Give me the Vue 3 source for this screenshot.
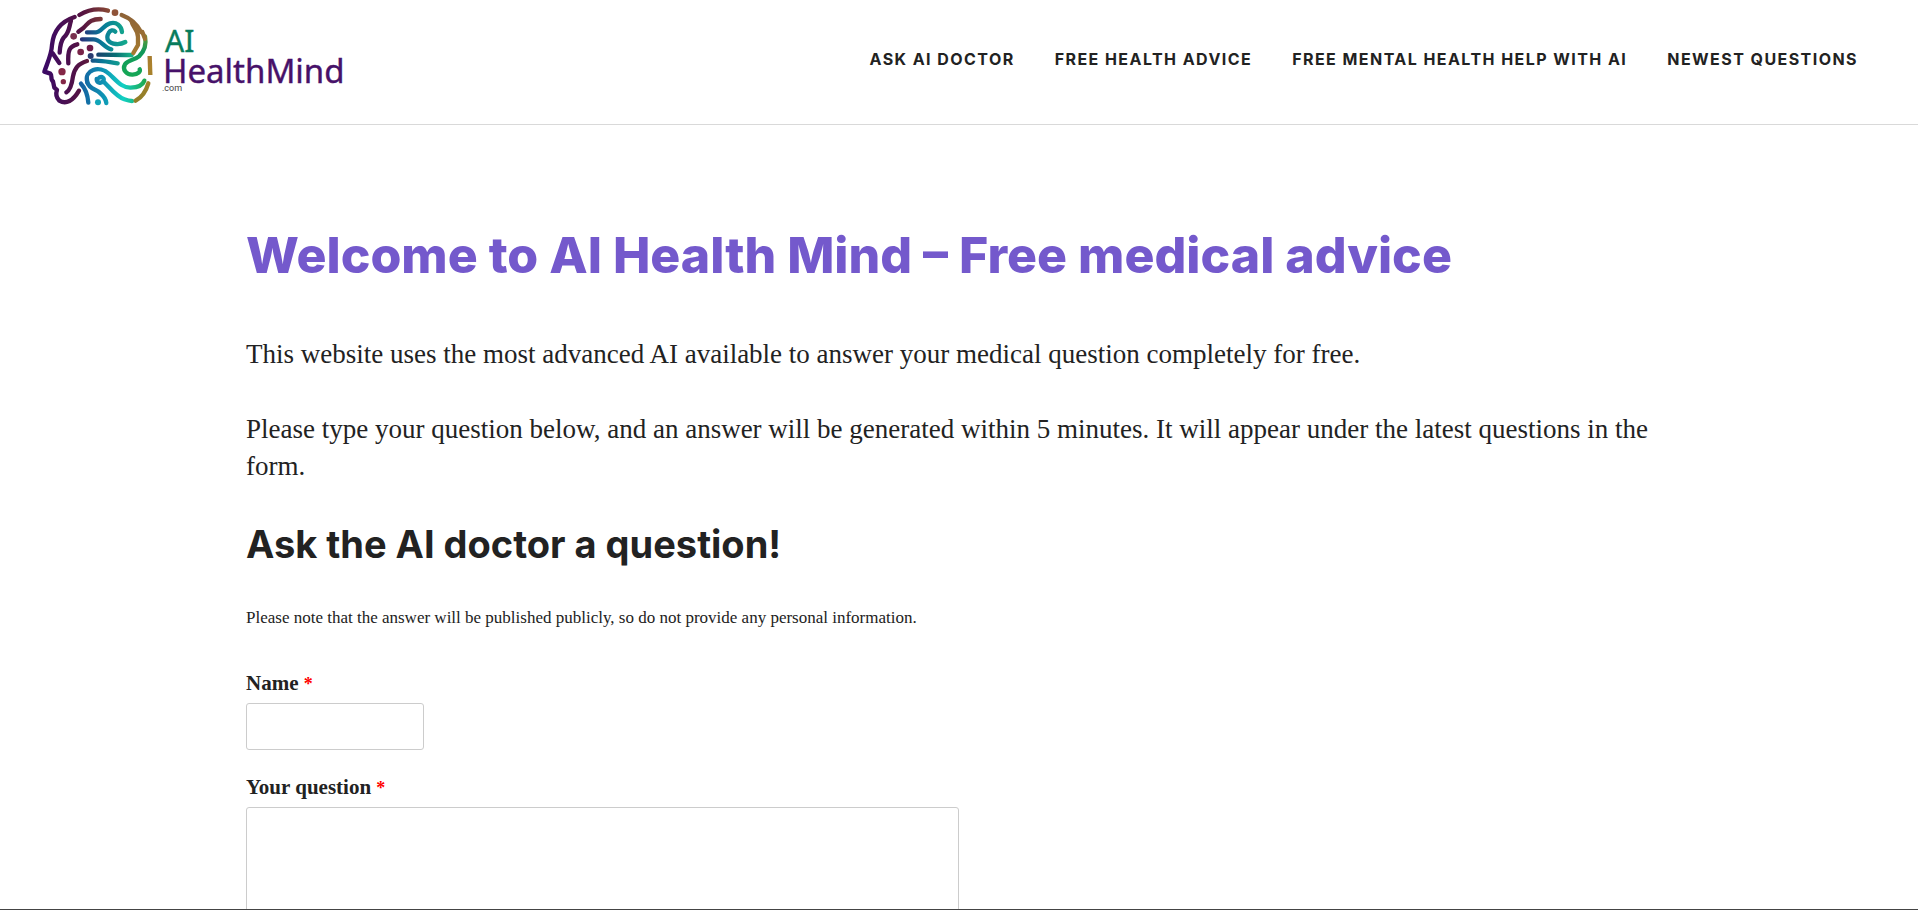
<script setup>
const links = ['Ask AI Doctor', 'Free Health Advice', 'Free Mental Health Help with AI', 'Newest Questions']
</script>

<template>
  <div class="page">
    <header class="header">
      <a class="brand" href="#" aria-label="AI HealthMind.com">
        <svg class="logo" viewBox="0 0 330 112" aria-hidden="true">
          <defs>
            <linearGradient id="outline" gradientUnits="userSpaceOnUse" x1="30" y1="0" x2="220" y2="0">
              <stop offset="0" stop-color="#3c0a64" /><stop offset=".6" stop-color="#571440" /><stop offset="1" stop-color="#8a4a34" />
            </linearGradient>
            <linearGradient id="teal" gradientUnits="userSpaceOnUse" x1="130" y1="0" x2="270" y2="0">
              <stop offset="0" stop-color="#2b2c78" /><stop offset=".5" stop-color="#087a98" /><stop offset="1" stop-color="#14a98c" />
            </linearGradient>
            <linearGradient id="bar" gradientUnits="userSpaceOnUse" x1="180" y1="0" x2="300" y2="0">
              <stop offset="0" stop-color="#1c3f6c" /><stop offset=".5" stop-color="#076f74" /><stop offset="1" stop-color="#1cc48c" />
            </linearGradient>
            <linearGradient id="spring" gradientUnits="userSpaceOnUse" x1="0" y1="105" x2="0" y2="230">
              <stop offset="0" stop-color="#6c9a30" /><stop offset=".4" stop-color="#10985a" /><stop offset="1" stop-color="#16a856" />
            </linearGradient>
            <linearGradient id="lower" gradientUnits="userSpaceOnUse" x1="135" y1="0" x2="330" y2="0">
              <stop offset="0" stop-color="#1560a0" /><stop offset=".35" stop-color="#0e94b4" /><stop offset=".65" stop-color="#12d0c4" /><stop offset="1" stop-color="#1fa84c" />
            </linearGradient>
            <linearGradient id="gold" gradientUnits="userSpaceOnUse" x1="0" y1="40" x2="0" y2="310">
              <stop offset="0" stop-color="#8d6238" /><stop offset=".6" stop-color="#ac822c" /><stop offset="1" stop-color="#8f7f28" />
            </linearGradient>
          </defs>
          <g class="strokes" transform="scale(.3333)">
            <g stroke="url(#outline)">
              <path d="M116 51C77 64 52 93 48 135C47 162 36 184 25 215L43 221C50 227 42 238 51 244L55 263L63 270C59 281 61 293 70 302C90 314 111 303 129 272" />
              <path d="M130 45C160 27 187 24 216 32" />
              <path d="M105 62C98 85 100 98 83 113C73 126 72 139 71 158" />
              <path d="M50 160L70 189" />
              <path d="M194 57C161 57 157 70 143 83L127 95" />
              <path d="M124 133C100 139 95 151 97 190" />
              <path d="M153 183C126 191 116 205 111 229C108 253 102 271 91 277" />
            </g>
            <g stroke="url(#teal)">
              <path d="M153 97H180C196 96 203 75 222 70C242 65 256 77 258 96" />
              <path d="M138 118H172C195 118 202 142 226 148" />
              <path d="M238 95C232 88 222 91 218 99C208 117 218 130 240 132C251 133 261 130 268 126" />
              <path d="M170 182C196 180 216 186 245 190" />
            </g>
            <path stroke="url(#bar)" d="M187 164L270 165H287" />
            <path stroke="url(#spring)" d="M327 109C332 134 324 155 309 169C294 181 277 179 267 193C258 208 271 225 290 224C307 223 314 214 311 208" />
            <g stroke="url(#lower)">
              <path d="M154 247C143 210 190 194 220 222C244 244 258 264 284 263C304 262 320 256 325 242" />
              <path d="M182 237C182 249 196 252 202 243C206 235 198 228 190 233M205 247C219 260 240 289 265 298C276 302 282 303 288 303" />
              <path d="M135 251C148 265 155 281 157 308" />
              <path d="M154 247C160 268 180 266 192 279C204 289 210 299 211 309" />
            </g>
            <g stroke="url(#gold)">
              <path d="M257 45C281 54 304 74 315 96" />
              <path d="M286 62C290 83 306 87 306 111V135L292 159" />
              <path d="M319 96L327 116" />
              <path stroke-linecap="butt" d="M341 168L343 225" />
              <path d="M337 250C330 274 319 291 299 302" />
            </g>
            <g stroke="none">
              <circle cx="237" cy="38" r="10" fill="#8f5338" />
              <circle cx="113" cy="109" r="10" fill="#79304f" />
              <circle cx="162" cy="144" r="10" fill="#6c1b49" />
              <circle cx="134" cy="156" r="10" fill="#782348" />
              <circle cx="164" cy="168" r="9" fill="#293b70" />
              <circle cx="78" cy="215" r="11" fill="#842747" />
              <circle cx="82" cy="245" r="8" fill="#842747" />
              <circle cx="186" cy="307" r="9" fill="#12a5b8" />
            </g>
          </g>
          <text class="word green" x="129" y="52">AI</text>
          <text class="word purple" x="127" y="83">HealthMind</text>
          <text class="suffix" x="126" y="91">.com</text>
        </svg>
      </a>
      <nav class="nav" aria-label="Main">
        <a v-for="link in links" :key="link" href="#">{{ link }}</a>
      </nav>
    </header>
    <main class="content">
      <h1>Welcome to AI Health Mind – Free medical advice</h1>
      <p>This website uses the most advanced AI available to answer your medical question completely for free.</p>
      <p>Please type your question below, and an answer will be generated within 5 minutes. It will appear under the latest questions in the form.</p>
      <h2>Ask the AI doctor a question!</h2>
      <p class="note">Please note that the answer will be published publicly, so do not provide any personal information.</p>
      <form @submit.prevent>
        <div class="field">
          <label for="name">Name <span class="required">*</span></label>
          <input id="name" type="text" required />
        </div>
        <div class="field">
          <label for="question">Your question <span class="required">*</span></label>
          <textarea id="question" required></textarea>
        </div>
      </form>
    </main>
  </div>
</template>

<style>
body { margin: 0; background: #fff; }
</style>

<style scoped>
.page {
  box-sizing: border-box;
  height: 100vh;
  overflow: hidden;
  border-bottom: 1px solid #444;
  color: #222;
  font-family: "Liberation Serif", serif;
}
.header {
  display: flex;
  justify-content: space-between;
  padding: 0 60px 0 36px;
  border-bottom: 1px solid #d9d9d9;
}
.brand { display: block; padding-bottom: 12px; }
.logo { display: block; width: 330px; height: 112px; }
.strokes { fill: none; stroke-width: 13; stroke-linecap: round; stroke-linejoin: round; }
.word { font-family: "Noto Sans", sans-serif; }
.green { font-size: 30px; fill: #087c5c; stroke: #087c5c; stroke-width: 0.4; }
.purple { font-size: 33px; fill: #471169; stroke: #471169; stroke-width: 0.4; }
.suffix { font-family: Roboto, sans-serif; font-size: 9px; fill: #444; }
.nav {
  display: flex;
  gap: 40px;
  align-items: center;
  padding-bottom: 6px;
  font: 700 16px/24px Inter, sans-serif;
  letter-spacing: 0.09em;
  text-transform: uppercase;
}
.nav a { color: #222; text-decoration: none; white-space: nowrap; }
.content { max-width: 1426px; margin: 0 auto; padding: 100px 24px 0; }
h1, h2, p { margin: 0; }
h1 { color: #7459cc; font: 800 50px/60px Inter, sans-serif; margin-bottom: 51px; }
h2 { font: 700 38px/42px Inter, sans-serif; margin-bottom: 40px; }
p { font-size: 27px; line-height: 37px; margin-bottom: 38px; }
.note { font-size: 17px; line-height: 26px; margin-bottom: 39px; }
.field { display: flex; flex-direction: column; align-items: flex-start; margin-bottom: 24px; }
label { font-size: 21px; font-weight: 700; line-height: 26px; margin-bottom: 6px; }
.required { color: #f00; font-size: 18px; }
input, textarea {
  box-sizing: border-box;
  border: 1px solid #ccc;
  border-radius: 3px;
  background: #fff;
  padding: 8px 12px;
  font: inherit;
  font-size: 20px;
}
input { width: 178px; height: 47px; }
textarea { width: 50%; height: 180px; resize: none; }
</style>
